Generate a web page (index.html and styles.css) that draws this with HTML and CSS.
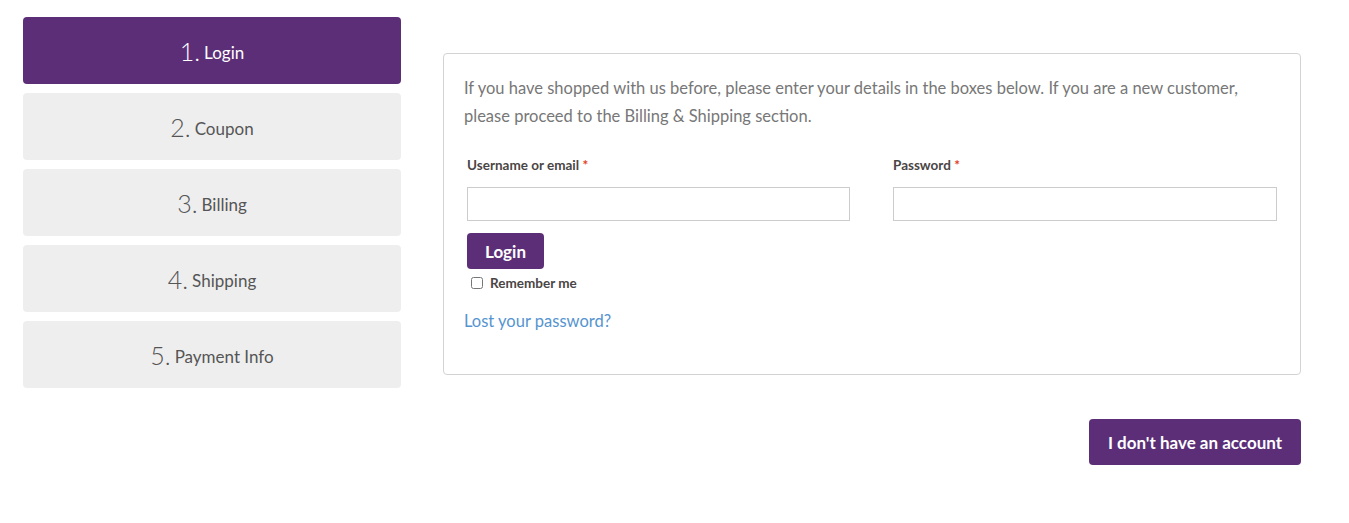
FILE: index.html
```html
<!DOCTYPE html>
<html lang="en">
<head>
<meta charset="utf-8">
<title>Checkout</title>
<link rel="stylesheet" href="styles.css">
</head>
<body>
<div class="checkout">
  <nav class="steps">
    <div class="step active"><span class="num">1.</span><span class="label">Login</span></div>
    <div class="step"><span class="num">2.</span><span class="label">Coupon</span></div>
    <div class="step"><span class="num">3.</span><span class="label">Billing</span></div>
    <div class="step"><span class="num">4.</span><span class="label">Shipping</span></div>
    <div class="step"><span class="num">5.</span><span class="label">Payment Info</span></div>
  </nav>
  <main class="content">
    <form class="login-box">
      <p class="intro">If you have shopped with us before, please enter your details in the boxes below. If you are a new customer, please proceed to the Billing &amp; Shipping section.</p>
      <div class="fields">
        <div class="field">
          <label class="field-label">Username or email <span class="req">*</span></label>
          <input class="text-input" type="text">
        </div>
        <div class="field">
          <label class="field-label">Password <span class="req">*</span></label>
          <input class="text-input" type="password">
        </div>
      </div>
      <div class="actions">
        <button type="button" class="btn btn-login">Login</button>
        <label class="remember"><input type="checkbox" class="check"> Remember me</label>
      </div>
      <p class="lost"><a href="#">Lost your password?</a></p>
    </form>
    <div class="next-row">
      <button type="button" class="btn btn-next">I don't have an account</button>
    </div>
  </main>
</div>
</body>
</html>
```
FILE: styles.css
```css
* { box-sizing: border-box; }
body {
  margin: 0;
  background: #fff;
  font-family: "Lato", "Liberation Sans", sans-serif;
  color: #777;
}
.checkout {
  display: flex;
  align-items: flex-start;
  gap: 42px;
  padding: 17px 23px;
}
.steps {
  width: 378px;
  display: flex;
  flex-direction: column;
  gap: 9px;
}
.step {
  height: 67px;
  border-radius: 4px;
  background: #eeeeee;
  color: #555;
  display: flex;
  align-items: center;
  justify-content: center;
  gap: 4px;
}
.step.active {
  background: #5c2e77;
  color: #fff;
}
.num {
  font-size: 25px;
  font-weight: 300;
}
.label {
  font-size: 17px;
  padding-top: 4px;
}
.content {
  width: 858px;
  margin-top: 36px;
}
.login-box {
  border: 1px solid #d3d3d3;
  border-radius: 4px;
  padding: 20px 20px 41px;
}
.intro {
  margin: 0 0 27px;
  font-size: 16.5px;
  line-height: 28px;
  color: #777;
}
.fields {
  display: grid;
  grid-template-columns: 383px 384px;
  gap: 43px;
  padding: 0 3px;
}
.field {
  display: flex;
  flex-direction: column;
}
.field-label {
  font-size: 13.5px;
  font-weight: 700;
  color: #4a4545;
  line-height: 17px;
  margin-bottom: 13px;
}
.req { color: #e2401c; }
.text-input {
  height: 34px;
  border: 1px solid #cccccc;
  border-radius: 0;
  padding: 4px 8px;
  font-size: 14px;
  background: #fff;
}
.actions {
  padding: 12px 3px 0;
  display: flex;
  flex-direction: column;
  align-items: flex-start;
}
.btn {
  border: 0;
  border-radius: 4px;
  background: #5c2e77;
  color: #fff;
  font-family: "Lato", "Liberation Sans", sans-serif;
  font-weight: 700;
  cursor: pointer;
}
.btn-login {
  height: 36px;
  width: 77px;
  font-size: 17px;
  padding: 0;
}
.remember {
  margin-top: 6px;
  display: flex;
  align-items: center;
  gap: 7px;
  font-size: 13.5px;
  font-weight: 700;
  color: #4a4545;
  padding-left: 4px;
}
.check {
  margin: 0;
  width: 12px;
  height: 12px;
}
.lost {
  margin: 18px 0 0;
  font-size: 16.5px;
  line-height: 24px;
}
.lost a {
  color: #5594cf;
  text-decoration: none;
}
.next-row {
  display: flex;
  justify-content: flex-end;
  margin-top: 44px;
}
.btn-next {
  height: 46px;
  width: 212px;
  font-size: 17px;
  padding: 0;
}
```
